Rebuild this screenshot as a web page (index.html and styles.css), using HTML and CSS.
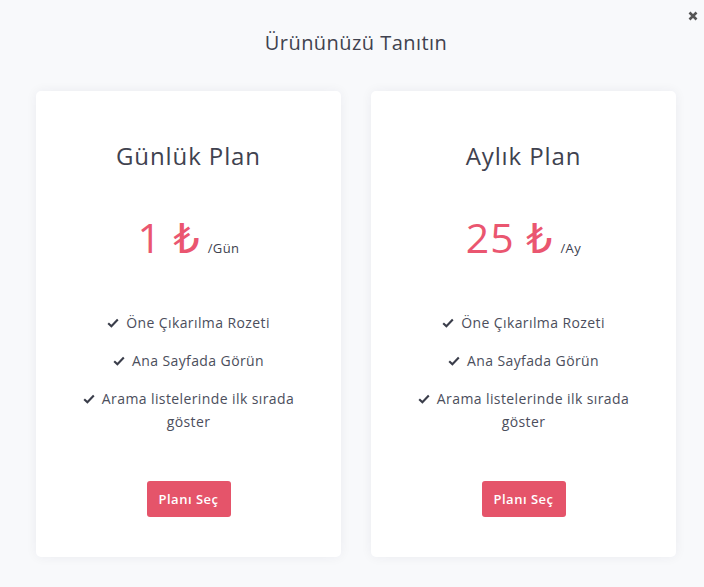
FILE: index.html
```html
<!DOCTYPE html>
<html lang="tr">
<head>
<meta charset="utf-8">
<link rel="stylesheet" href="styles.css">
</head>
<body>
<div class="modal">
  <button class="close" aria-label="Kapat">
    <svg width="10" height="10" viewBox="0 0 10 10"><path d="M1.5 1.5 L8.5 8.5 M8.5 1.5 L1.5 8.5" stroke="#555" stroke-width="2.6"/></svg>
  </button>
  <h1 class="title">Ürününüzü Tanıtın</h1>
  <div class="plans">
    <div class="card">
      <h2 class="plan-name">Günlük Plan</h2>
      <div class="price"><span class="amount">1 ₺</span><span class="per">/Gün</span></div>
      <ul class="features">
        <li><svg class="check" width="12" height="10" viewBox="0 0 12 10"><path d="M1.2 5.2 L4.4 8.3 L10.8 1.6" fill="none" stroke="#3a3d4a" stroke-width="2.1"/></svg>Öne Çıkarılma Rozeti</li>
        <li><svg class="check" width="12" height="10" viewBox="0 0 12 10"><path d="M1.2 5.2 L4.4 8.3 L10.8 1.6" fill="none" stroke="#3a3d4a" stroke-width="2.1"/></svg>Ana Sayfada Görün</li>
        <li><svg class="check" width="12" height="10" viewBox="0 0 12 10"><path d="M1.2 5.2 L4.4 8.3 L10.8 1.6" fill="none" stroke="#3a3d4a" stroke-width="2.1"/></svg>Arama listelerinde ilk sırada göster</li>
      </ul>
      <button class="btn">Planı Seç</button>
    </div>
    <div class="card">
      <h2 class="plan-name">Aylık Plan</h2>
      <div class="price"><span class="amount">25 ₺</span><span class="per">/Ay</span></div>
      <ul class="features">
        <li><svg class="check" width="12" height="10" viewBox="0 0 12 10"><path d="M1.2 5.2 L4.4 8.3 L10.8 1.6" fill="none" stroke="#3a3d4a" stroke-width="2.1"/></svg>Öne Çıkarılma Rozeti</li>
        <li><svg class="check" width="12" height="10" viewBox="0 0 12 10"><path d="M1.2 5.2 L4.4 8.3 L10.8 1.6" fill="none" stroke="#3a3d4a" stroke-width="2.1"/></svg>Ana Sayfada Görün</li>
        <li><svg class="check" width="12" height="10" viewBox="0 0 12 10"><path d="M1.2 5.2 L4.4 8.3 L10.8 1.6" fill="none" stroke="#3a3d4a" stroke-width="2.1"/></svg>Arama listelerinde ilk sırada göster</li>
      </ul>
      <button class="btn">Planı Seç</button>
    </div>
  </div>
</div>
</body>
</html>
```
FILE: styles.css
```css
* { box-sizing: border-box; }
html, body { margin: 0; padding: 0; }
body {
  background: #f8f9fb;
  font-family: "Open Sans", "DejaVu Sans", sans-serif;
  color: #464a5a;
  width: 704px;
  height: 587px;
  overflow: hidden;
}
.modal {
  position: relative;
  padding: 28px 28px 0 36px;
}
.close {
  position: absolute;
  top: 11px;
  right: 6px;
  border: 0;
  background: none;
  padding: 0;
  width: 10px;
  height: 10px;
  display: flex;
}
.title {
  margin: 0;
  text-align: center;
  font-size: 20px;
  font-weight: 400;
  line-height: 30px;
  letter-spacing: 0.45px;
  color: #40424f;
}
.plans {
  display: flex;
  gap: 30px;
  margin-top: 33px;
}
.card {
  width: 305px;
  height: 466px;
  background: #fff;
  border-radius: 5px;
  box-shadow: 0 0 12px rgba(30, 40, 70, 0.06);
  display: flex;
  flex-direction: column;
  align-items: center;
  padding-top: 49px;
}
.plan-name {
  margin: 0;
  font-size: 24px;
  font-weight: 400;
  line-height: 32px;
  letter-spacing: 0.9px;
  color: #40424f;
}
.price {
  margin-top: 40px;
  display: flex;
  align-items: baseline;
}
.amount {
  font-size: 41px;
  font-weight: 500;
  line-height: 50px;
  letter-spacing: 1px;
  color: #ea5670;
}
.per {
  font-size: 13px;
  font-weight: 500;
  letter-spacing: 0.4px;
  color: #40424f;
  margin-left: 7px;
}
.features {
  list-style: none;
  margin: 49px 0 0;
  padding: 0 40px;
  text-align: center;
  font-size: 14px;
  line-height: 23px;
  letter-spacing: 0.4px;
  color: #4b4e5c;
}
.features li { margin-bottom: 15px; }
.check {
  margin-right: 7px;
  vertical-align: 0;
}
.btn {
  margin-top: 33px;
  background: #e5546a;
  color: #fff;
  border: 0;
  border-radius: 3px;
  width: 84px;
  height: 36px;
  font-family: inherit;
  font-size: 13px;
  font-weight: 600;
  letter-spacing: 0.5px;
  padding: 0;
}
```
